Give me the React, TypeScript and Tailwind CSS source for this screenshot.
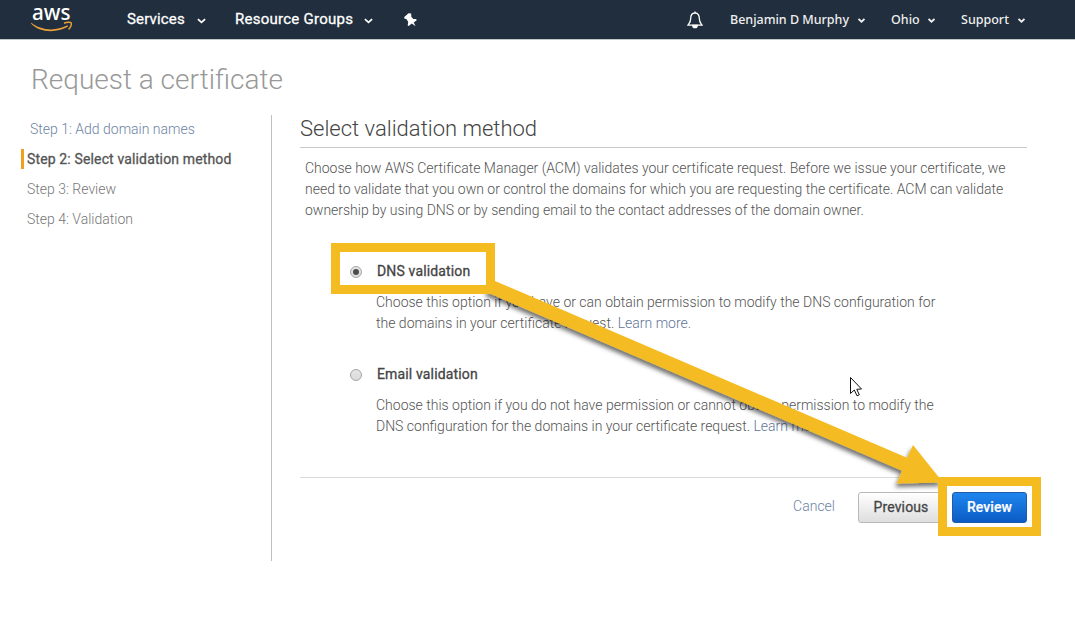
import React from "react";

function Caret({ className = "" }: { className?: string }) {
  return (
    <svg width="9" height="6" viewBox="0 0 10 6" className={"mt-[2px] shrink-0 " + className} fill="none" stroke="#fff" strokeWidth="1.9">
      <path d="M1 1 L5 4.6 L9 1" />
    </svg>
  );
}

function SmallCaret() {
  return (
    <svg width="7" height="5" viewBox="0 0 7 5" className="shrink-0" fill="none" stroke="#eee" strokeWidth="1.9">
      <path d="M0.500 0.900 L3.500 3.600 L6.500 0.900" />
    </svg>
  );
}

function Line({ className = "", children }: { className?: string; children: React.ReactNode }) {
  return <span className={"block w-max whitespace-nowrap " + className}>{children}</span>;
}

function Radio({ checked }: { checked?: boolean }) {
  return (
    <span className="mt-[5px] mr-px flex h-[12px] w-[12px] shrink-0 items-center justify-center rounded-full border border-[#a6a6a6] bg-linear-to-b from-[#e4e4e4] to-[#dcdcdc]">
      {checked && <span className="h-[6px] w-[6px] rounded-full bg-[#4c4c4c]" />}
    </span>
  );
}

function Annotations() {
  return (
    <svg width="1075" height="623" viewBox="0 0 1075 623" className="pointer-events-none absolute top-0 left-0">
      <defs>
        <filter id="shade" x="-10%" y="-10%" width="120%" height="120%">
          <feDropShadow dx="-1.5" dy="3.5" stdDeviation="2.2" floodColor="#000" floodOpacity="0.55" />
        </filter>
      </defs>
      <path
        d="M495 281 L907 457.700 L913 445 L943 482.500 L896.700 483.500 L902 470.700 L486 292 Z"
        fill="#f4bc20"
        filter="url(#shade)"
      />
      <rect x="335.500" y="247.500" width="155" height="42" fill="none" stroke="#f4bc20" strokeWidth="9" />
      <rect x="942.500" y="481.500" width="94" height="50" fill="none" stroke="#f4bc20" strokeWidth="9" />
      <path
        d="M850.500 377.500 L850.500 393.500 L854.300 390 L857 395.800 L859.300 394.800 L856.800 389.300 L861.500 389 Z"
        fill="#fff"
        stroke="#111"
        strokeWidth="1"
      />
    </svg>
  );
}

export default function App() {
  return (
    <div className="relative h-[623px] w-[1075px] overflow-hidden bg-white font-['Roboto',sans-serif] text-[14px] font-light text-[#545454]">
      <header className="flex h-[40px] items-center border-b border-[#c4c7ca] bg-[#212e3d] text-white">
        <svg width="42" height="39" viewBox="0 0 42 39" className="ml-[31px] shrink-0 overflow-visible">
          <text x="1" y="19.600" fill="#fff" fontFamily="Noto Sans" fontWeight="500" fontSize="22" textLength="38.500" lengthAdjust="spacingAndGlyphs">
            aws
          </text>
          <path d="M0.300 22.800 C9 30 24 32 36.500 25.300 L37.200 26.600 C25 33.600 8 32.600 0 23.500 Z" fill="#e99f3a" />
          <path d="M33 23.200 C36 22 39.500 22 40.200 22.900 C40.900 24.200 39.600 27.600 37.600 29.400" fill="none" stroke="#e99f3a" strokeWidth="1.500" />
        </svg>
        <nav className="flex w-[300px] shrink-0 items-center pl-[54px] text-[15px] font-normal [-webkit-text-stroke:0.3px]">
          <span className="w-[70px] shrink-0 tracking-[0.16px] whitespace-nowrap">Services</span>
          <Caret />
          <span className="ml-[29px] w-[129px] shrink-0 tracking-[0.25px] whitespace-nowrap">Resource Groups</span>
          <Caret />
        </nav>
        <svg width="13" height="14" viewBox="0 0 13 14" className="ml-[31px] shrink-0" fill="#fff">
          <path d="M0.300 4 L4.500 0.300 L7.200 0.600 L7.300 3.800 L9.300 6 L12.200 5.900 L12.700 7.200 L9.700 9.600 L11.600 13.300 L7.800 10.500 L4.700 13 L3.700 12.600 L4.200 9 L2.600 6.200 L0.300 5.600 Z" />
        </svg>
        <svg width="16" height="18" viewBox="0 0 16 18" className="ml-[270px] shrink-0" fill="none" stroke="#fff" strokeWidth="1.300">
          <path d="M8 2 C4.500 2 3.700 5 3.700 7.500 C3.700 11 2.500 12 1 14.200 H15 C13.500 12 12.300 11 12.300 7.500 C12.300 5 11.500 2 8 2 Z" />
          <path d="M8 0.500 V2" />
          <path d="M5.800 14.500 A2.200 2.200 0 0 0 10.200 14.500 Z" fill="#fff" />
        </svg>
        <div className="ml-[27px] flex items-center pt-px font-['Noto_Sans',sans-serif] text-[12.500px] leading-[18px] font-medium text-[#eee]">
          <span className="w-[128px] tracking-[-0.010px] whitespace-nowrap">Benjamin D Murphy</span>
          <SmallCaret />
          <span className="ml-[26px] w-[37px] whitespace-nowrap">Ohio</span>
          <SmallCaret />
          <span className="ml-[26px] w-[57px] whitespace-nowrap">Support</span>
          <SmallCaret />
        </div>
      </header>

      <h1 className="pt-[21px] pl-[31px] text-[28px] leading-[38px] font-light text-[#999]">Request a certificate</h1>

      <div className="mt-[16px] flex">
        <aside className="h-[446px] w-[272px] border-r border-[#c0c0c0] text-[#777]">
          <div className="flex flex-col gap-[10px] pt-[4px]">
            <Line className="ml-[30px] leading-[20px] text-[#6d83a3]">Step 1: Add domain names</Line>
            <Line className="ml-[21px] border-l-[3px] border-[#f0a01e] pl-[3px] leading-[20px] font-normal tracking-[0.14px] text-[#545454] [-webkit-text-stroke:0.3px]">
              Step 2: Select validation method
            </Line>
            <Line className="ml-[27px] leading-[20px]">Step 3: Review</Line>
            <Line className="ml-[27px] leading-[20px]">Step 4: Validation</Line>
          </div>
        </aside>

        <main className="ml-[28px] w-[727px]">
          <h2 className="h-[33px] border-b border-[#c8c8c8] text-[22px] leading-[27px] font-light text-[#444]">Select validation method</h2>
          <div className="pt-[10px] pl-[5px] leading-[21px] tracking-[-0.006px]">
            <Line>Choose how AWS Certificate Manager (ACM) validates your certificate request. Before we issue your certificate, we</Line>
            <Line>need to validate that you own or control the domains for which you are requesting the certificate. ACM can validate</Line>
            <Line>ownership by using DNS or by sending email to the contact addresses of the domain owner.</Line>
          </div>
          <div className="mt-[40px] ml-[50px] flex gap-[13px] leading-[21px]">
            <Radio checked />
            <div>
              <Line className="ml-px font-normal tracking-[0.15px] text-[#444] [-webkit-text-stroke:0.3px]">DNS validation</Line>
              <div className="mt-[10px]">
                <Line>Choose this option if you have or can obtain permission to modify the DNS configuration for</Line>
                <Line>
                  the domains in your certificate request. <span className="text-[#5f7598]">Learn more.</span>
                </Line>
              </div>
            </div>
          </div>
          <div className="mt-[30px] ml-[50px] flex gap-[13px] leading-[21px]">
            <Radio />
            <div>
              <Line className="ml-px font-normal tracking-[0.15px] text-[#444] [-webkit-text-stroke:0.3px]">Email validation</Line>
              <div className="mt-[10px]">
                <Line>Choose this option if you do not have permission or cannot obtain permission to modify the</Line>
                <Line>
                  DNS configuration for the domains in your certificate request. <span className="text-[#5f7598]">Learn more.</span>
                </Line>
              </div>
            </div>
          </div>
          <div className="mt-[40px] flex justify-end border-t border-[#dcdcdc] pt-[14px]">
            <span className="mr-[23px] leading-[29px] text-[#6d83a3]">Cancel</span>
            <span className="mr-[8px] flex h-[31px] w-[86px] items-center justify-center rounded-[3px] border border-[#b8b8b8] bg-linear-to-b from-white to-[#dedede] font-normal tracking-[0.12px] text-[#444] [-webkit-text-stroke:0.3px]">
              Previous
            </span>
            <span className="flex h-[31px] w-[75px] items-center justify-center rounded-[3px] border border-[#1c5ca8] bg-linear-to-b from-[#1f86ee] to-[#0c5cc4] font-medium tracking-[0.1px] text-white [-webkit-text-stroke:0.2px]">
              Review
            </span>
          </div>
        </main>
      </div>
      <Annotations />
    </div>
  );
}
